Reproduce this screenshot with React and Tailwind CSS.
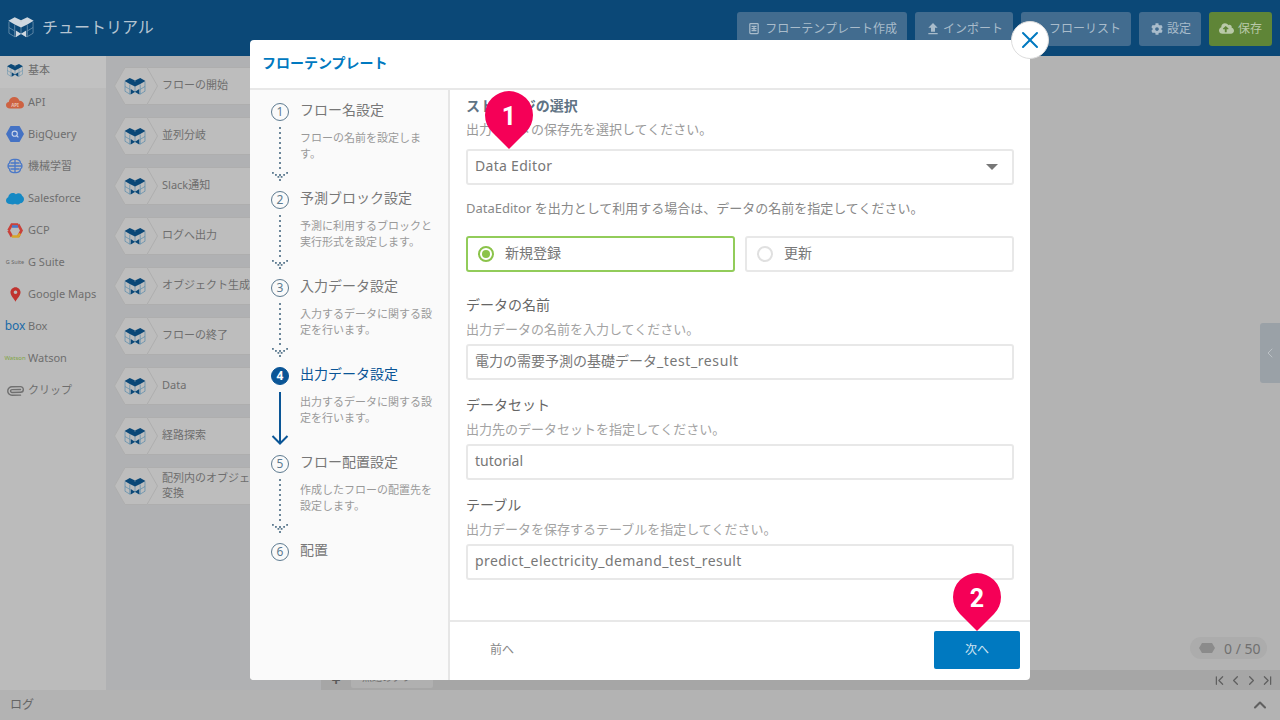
import { ChevronDown, ChevronFirst, ChevronLast, ChevronLeft, ChevronRight, ChevronUp, Paperclip, X } from 'lucide-react';
import { FaCloudUploadAlt, FaCog } from 'react-icons/fa';
import { MdFileUpload } from 'react-icons/md';

const FONT = { fontFamily: '"Noto Sans", "Noto Sans CJK JP", sans-serif' };

// cube logo used for the app mark and every block
function CubeIcon({ top = '#0b4877', line = '#3f7fa8', className = '' }) {
  return (
    <svg viewBox="0 0 22 20" className={className} fill="none">
      <path d="M0.5 5V15L5.5 18L11 15.5L16.5 18L21.5 15V5M11 8V15.5M5.5 8V18M16.5 8V18M0.5 10L5.5 13M21.5 10L16.5 13" stroke={line} strokeWidth="0.6" />
      <path d="M0 4.2L5.5 1L11 3.6L16.5 1L22 4.2L16.5 7.4L11 10L5.5 7.4Z" fill={top} />
      <path d="M11 3.6V5" stroke="#bdbdbd" strokeWidth="0.5" />
      <path d="M6.5 12.5L11 15.5L6.5 18.5ZM15.5 12.5L11 15.5L15.5 18.5Z" fill={top} />
    </svg>
  );
}

function HeaderButton({ icon, label, green }) {
  return (
    <div className={`flex h-[34px] items-center gap-1 rounded-[3px] pb-[1px] pr-[10px] text-[12px] ${green ? 'bg-[#5f8537] pl-[10px] text-[#b9c9a8]' : 'bg-[#426c8f] pl-3 text-[#a9bccb]'}`}>
      {icon}
      <span>{label}</span>
    </div>
  );
}

function Header() {
  return (
    <header className="flex h-14 justify-between bg-[#0b4877] pl-2 pr-2">
      <div className="flex items-center gap-2 pb-[2px]">
        <CubeIcon top="#cfd8e0" line="#7f9fb8" className="h-[23px] w-[26px]" />
        <span className="text-[16px] text-[#b5c4d1]">チュートリアル</span>
      </div>
      <div className="mt-3 flex gap-2 self-start">
        <HeaderButton label="フローテンプレート作成" icon={
          <svg viewBox="0 0 12 14" className="mr-[2px] h-[13px] w-[10px]" fill="none" stroke="#a9bccb" strokeWidth="1.5">
            <rect x="1" y="1" width="10" height="12" rx="1" />
            <path d="M3 4.5H9M3 7H9M3 9.5H9M6 4.5V9.5" />
          </svg>
        } />
        <HeaderButton label="インポート" icon={<MdFileUpload className="-mx-0.5 h-4 w-4" />} />
        <HeaderButton label="フローリスト" icon={<span className="h-3 w-3" />} />
        <HeaderButton label="設定" icon={<FaCog className="h-3 w-3" />} />
        <HeaderButton green label="保存" icon={<FaCloudUploadAlt className="h-[15px] w-[15px]" />} />
      </div>
    </header>
  );
}

const sideItems = [
  {
    label: '基本', active: true,
    icon: <CubeIcon className="h-[15px] w-[16px]" />,
  },
  {
    label: 'API',
    icon: (
      <svg viewBox="0 0 18 13" className="h-[13px] w-[18px]">
        <path d="M4 12.5C1.5 12.5 0 11 0 9C0 7.3 1.2 6.2 2.7 6C3.2 2.6 5.7 1 8.2 1C10.8 1 12.7 2.6 13.4 4.8C15.9 4.9 18 6.5 18 9C18 11 16.4 12.5 14 12.5Z" fill="#cd6242" />
        <text x="9" y="10.5" textAnchor="middle" fontSize="4.5" fontWeight="700" fill="#e8c0b0">API</text>
      </svg>
    ),
  },
  {
    label: 'BigQuery',
    icon: (
      <svg viewBox="0 0 18 16" className="h-4 w-[18px]" fill="none">
        <path d="M0 8L4.5 0H13.5L18 8L13.5 16H4.5Z" fill="#4472c4" />
        <circle cx="8.7" cy="7.7" r="2.6" stroke="#c9d5ea" strokeWidth="1.1" />
        <path d="M10.6 9.6L12.4 11.4" stroke="#c9d5ea" strokeWidth="1.2" />
      </svg>
    ),
  },
  {
    label: '機械学習',
    icon: (
      <svg viewBox="0 0 18 16" className="h-4 w-[18px]" fill="none" stroke="#4a78c8" strokeWidth="1.3">
        <path d="M9 1.5C6 1 3.5 2.5 3.5 5C1.5 6 1.5 10 3.5 11C3.5 13.5 6 15 9 14.5C12 15 14.5 13.5 14.5 11C16.5 10 16.5 6 14.5 5C14.5 2.5 12 1 9 1.5Z" />
        <path d="M2 8H16M4.5 5H13.5M4.5 11H13.5M9 1.5V14.5" />
      </svg>
    ),
  },
  {
    label: 'Salesforce',
    icon: (
      <svg viewBox="0 0 18 13" className="h-[13px] w-[18px]">
        <path d="M4 12C1.6 12 0 10.6 0 8.6C0 7 1 5.7 2.2 5.2C2.5 2.8 4.4 1 6.6 1C8 1 9.1 1.5 9.9 2.3C10.7 1.6 11.7 1.2 12.7 1.2C14.6 1.2 15.9 2.5 16.2 4C17.3 4.7 18 5.9 18 7.2C18 9.5 16.3 11.2 14.2 11.2C13.5 12.1 12.6 12.5 11.4 12.5C10.4 12.5 9.7 12.2 9 11.7C8.2 12.2 7.4 12.4 6.6 12.4C5.6 12.4 4.8 12.3 4 12Z" fill="#1589c4" />
      </svg>
    ),
  },
  {
    label: 'GCP',
    icon: (
      <svg viewBox="0 0 16 15" className="h-[15px] w-4" fill="none" strokeWidth="2.6">
        <path d="M1.5 7.5L4.8 1.5H11.2" stroke="#c9413a" />
        <path d="M4.8 13.5L1.5 7.5" stroke="#c9413a" />
        <path d="M11.2 1.5L14.5 7.5L11.2 13.5" stroke="#c9413a" />
        <path d="M4.8 13.5H11.2L13 10.5" stroke="#d7a52a" />
        <path d="M5 3.5H11" stroke="#4a78c8" />
      </svg>
    ),
  },
  {
    label: 'G Suite',
    icon: <span className="text-[5.5px] text-[#666]">G Suite</span>,
  },
  {
    label: 'Google Maps',
    icon: (
      <svg viewBox="0 0 12 16" className="h-[15px] w-[11px]">
        <path fillRule="evenodd" d="M6 16C4.5 12.5 0.5 9.5 0.5 5.6C0.5 2.5 3 0 6 0C9 0 11.5 2.5 11.5 5.6C11.5 9.5 7.5 12.5 6 16ZM6 7.5A2 2 0 1 0 6 3.5A2 2 0 0 0 6 7.5Z" fill="#c0332f" />
      </svg>
    ),
  },
  {
    label: 'Box',
    icon: <span className="text-[12px] leading-none text-[#1a6aa8]">box</span>,
  },
  {
    label: 'Watson',
    icon: <span className="text-[6px] text-[#7fa544]">Watson</span>,
  },
  {
    label: 'クリップ',
    icon: <Paperclip className="h-[17px] w-[17px] rotate-45 text-[#707070]" />,
  },
];

function Sidebar() {
  return (
    <nav className="w-[106px] shrink-0 bg-[#bbbbbb]">
      {sideItems.map(item => (
        <div key={item.label} className={`flex h-8 items-center gap-[3px] pb-[4px] ${item.active ? 'bg-[#c1c1c1]' : ''}`}>
          <div className="flex w-[25px] shrink-0 items-center justify-center pl-[5px]">{item.icon}</div>
          <span className="whitespace-nowrap text-[11px] text-[#6e6e6e]">{item.label}</span>
        </div>
      ))}
    </nav>
  );
}

const blocks = ['フローの開始', '並列分岐', 'Slack通知', 'ログへ出力', 'オブジェクト生成', 'フローの終了', 'Data', '経路探索'];

function Block({ children }) {
  return (
    <div className="flex h-[38px] w-[205px] items-center">
      <div className="relative h-[38px] w-[44px] shrink-0">
        <svg viewBox="0 0 44 38" className="h-[38px] w-[44px]" fill="#bdbdbd" stroke="#aeaeae">
          <path d="M0.5 19L11 0.5H33L43.5 19L33 37.5H11Z" />
        </svg>
        <CubeIcon className="absolute left-[10px] top-[10px] h-[19px] w-[22px]" />
      </div>
      <div className="-ml-[10px] flex h-[38px] flex-1 items-center whitespace-nowrap border-b border-t border-[#aeaeae] bg-[#bdbdbd] pb-[3px] pl-[14px] text-[11px] leading-[15px] text-[#6e6e6e]">
        {children}
      </div>
    </div>
  );
}

function BlockPanel() {
  return (
    <div className="flex w-[215px] shrink-0 flex-col gap-3 bg-[#b0b1b3] pl-2 pt-[11px]">
      {blocks.map(b => <Block key={b}>{b}</Block>)}
      <Block>
        <span>配列内のオブジェクト<br />変換</span>
      </Block>
    </div>
  );
}

function Canvas() {
  return (
    <div className="flex min-w-0 flex-1 flex-col">
      <div className="relative flex-1 bg-[#b3b3b3]">
        <div className="absolute right-0 top-[267px] flex h-[60px] w-5 items-center justify-center rounded-l-[3px] bg-[#9aa1a7]">
          <ChevronLeft className="h-4 w-4 text-[#bcc1c5]" strokeWidth={1.5} />
        </div>
        <div className="absolute bottom-[11px] right-[13px] flex h-[22px] w-[77px] items-center gap-[9px] rounded-full bg-[#acacac] pl-[9px] text-[14px] text-[#707070]">
          <svg viewBox="0 0 16 10" className="h-[10px] w-4"><path d="M0 5L3 0H13L16 5L13 10H3Z" fill="#8b8b8b" /></svg>
          <span>0 / 50</span>
        </div>
      </div>
      <div className="flex h-5 items-center bg-[#a6a6a6] pl-[5px] pr-[5px]">
        <span className="w-5 text-center text-[16px] font-bold leading-none text-[#5a5a5a]">+</span>
        <div className="ml-[5px] flex h-[18px] w-[82px] items-start gap-[9px] self-start rounded-[2px] bg-[#b0b0b0] pl-[11px] text-[10px] text-[#6e6e6e]">
          <span>無題のタブ</span>
          <ChevronDown className="mt-[4px] h-2 w-2" />
        </div>
        <div className="ml-auto flex gap-[1px] text-[#606060]">
          <ChevronFirst className="h-[15px] w-[15px]" />
          <ChevronLeft className="h-[15px] w-[15px]" />
          <ChevronRight className="h-[15px] w-[15px]" />
          <ChevronLast className="h-[15px] w-[15px]" />
        </div>
      </div>
    </div>
  );
}

const steps = [
  { title: 'フロー名設定', desc: <>フローの名前を設定しま<br />す。</> },
  { title: '予測ブロック設定', desc: <>予測に利用するブロックと<br />実行形式を設定します。</> },
  { title: '入力データ設定', desc: <>入力するデータに関する設<br />定を行います。</> },
  { title: '出力データ設定', desc: <>出力するデータに関する設<br />定を行います。</>, active: true },
  { title: 'フロー配置設定', desc: <>作成したフローの配置先を<br />設定します。</> },
  { title: '配置' },
];

function Connector({ active }) {
  if (active) {
    return (
      <svg viewBox="0 0 18 60" className="h-[60px] w-[18px]" fill="none" stroke="#0a5596" strokeWidth="2">
        <path d="M9 7V59M1.5 51L9 58.5L16.5 51" />
      </svg>
    );
  }
  return (
    <svg viewBox="0 0 18 60" className="h-[60px] w-[18px]" fill="#5d7a90">
      {[6, 11, 16, 21, 26, 31, 36, 41, 46, 53, 58].map(y => <rect key={y} x="8.1" y={y} width="1.8" height="2" />)}
      {[[1, 51], [4, 53], [6.5, 55], [15.2, 51], [12.2, 53], [9.7, 55]].map(([x, y]) => <rect key={x} x={x} y={y} width="1.8" height="1.8" />)}
    </svg>
  );
}

function Stepper() {
  return (
    <aside className="w-[200px] shrink-0 border-r-2 border-[#e6e6e6] bg-[#fafafa] pl-[21px] pt-[13px]">
      {steps.map((s, i) => (
        <div key={s.title} className="flex h-[88px] gap-[11px]">
          <div className="flex w-[18px] shrink-0 flex-col items-center">
            <div className={`flex h-[18px] w-[18px] shrink-0 items-center justify-center rounded-full border text-[12px] leading-none ${s.active ? 'border-[#0a5596] bg-[#0a5596] font-bold text-white' : 'border-[#5d7a90] text-[#5d7a90]'}`}>
              {i + 1}
            </div>
            {i < 5 && <Connector active={s.active} />}
          </div>
          <div className="min-w-0">
            <div className={`-mt-[2px] text-[14px] leading-[18px] ${s.active ? 'text-[#0a5596]' : 'text-[#777]'}`}>{s.title}</div>
            {s.desc && <div className="mt-[11px] whitespace-nowrap text-[11px] leading-4 text-[#999]">{s.desc}</div>}
          </div>
        </div>
      ))}
    </aside>
  );
}

function TextField({ label, help, value }) {
  return (
    <div>
      <div className="h-5 text-[14px] leading-5 text-[#666]">{label}</div>
      <div className="mt-1 h-5 text-[13px] leading-5 text-[#a3a3a3]">{help}</div>
      <div className="mt-[5px] flex h-9 items-center rounded-[3px] border-2 border-[#e8e8e8] pb-[3px] pl-[7px] text-[14px] text-[#777]">{value}</div>
    </div>
  );
}

function Radio({ label, checked }) {
  return (
    <div className={`flex h-9 flex-1 items-center gap-[11px] rounded-[3px] border-2 pl-[10px] text-[14px] text-[#777] ${checked ? 'border-[#92cc5a]' : 'border-[#e8e8e8]'}`}>
      <div className={`flex h-4 w-4 items-center justify-center rounded-full border-2 ${checked ? 'border-[#8bc34a]' : 'border-[#e0e0e0]'}`}>
        {checked && <div className="h-2 w-2 rounded-full bg-[#8bc34a]" />}
      </div>
      <span className="pb-[3px]">{label}</span>
    </div>
  );
}

function Pin({ n, className }) {
  return (
    <div className={`absolute h-[58px] w-12 ${className}`}>
      <svg viewBox="0 0 48 58" className="absolute inset-0 h-[58px] w-12">
        <path d="M24 58L7 41A24 24 0 1 1 41 41Z" fill="#f50057" />
      </svg>
      <div className="absolute inset-x-0 top-[2px] flex h-12 items-center justify-center font-['Roboto',sans-serif] text-[25px] font-bold text-white">{n}</div>
    </div>
  );
}

function Modal() {
  return (
    <div className="absolute left-[250px] top-10 flex h-[640px] w-[780px] flex-col rounded-[4px] bg-white">
      <div className="flex h-[50px] shrink-0 items-center border-b-2 border-[#e8e8e8] pb-[3px] pl-3 text-[14px] font-bold text-[#0079c0]">フローテンプレート</div>
      <div className="flex min-h-0 flex-1 overflow-hidden rounded-b-[4px]">
        <Stepper />
        <div className="flex min-w-0 flex-1 flex-col">
          <div className="flex-1 overflow-hidden px-4 pt-[6px]">
            <div className="h-5 text-[14px] font-bold leading-5 text-[#5f7384]">ストレージの選択</div>
            <div className="mt-[3px] h-5 text-[13px] leading-5 text-[#999]">出力データの保存先を選択してください。</div>
            <div className="mt-[10px] flex h-9 items-center justify-between rounded-[3px] border-2 border-[#e8e8e8] pl-[7px] pr-[14px] text-[14px] text-[#777]">
              <span className="pb-[3px] tracking-[0.3px]">Data Editor</span>
              <div className="h-0 w-0 border-x-[6px] border-t-[6px] border-x-transparent border-t-[#777]" />
            </div>
            <div className="mt-[13px] h-5 text-[13px] leading-5 text-[#888]">DataEditor を出力として利用する場合は、データの名前を指定してください。</div>
            <div className="mt-[18px] flex gap-[10px]">
              <Radio checked label="新規登録" />
              <Radio label="更新" />
            </div>
            <div className="mt-[23px] flex flex-col gap-[15px]">
              <TextField label="データの名前" help="出力データの名前を入力してください。" value={<span>電力の需要予測の基礎データ<span className="tracking-[0.6px]">_test_result</span></span>} />
              <TextField label="データセット" help="出力先のデータセットを指定してください。" value="tutorial" />
              <TextField label="テーブル" help="出力データを保存するテーブルを指定してください。" value={<span className="tracking-[0.42px]">predict_electricity_demand_test_result</span>} />
            </div>
          </div>
          <div className="flex h-[60px] shrink-0 items-center justify-between border-t-2 border-[#e8e8e8] pb-[2px] pl-10 pr-[10px]">
            <span className="pb-[1px] text-[12px] text-[#888]">前へ</span>
            <div className="flex h-[38px] w-[86px] items-center justify-center rounded-[2px] bg-[#0079c0] text-[12px] text-[#cfe4f2]">次へ</div>
          </div>
        </div>
      </div>
      <div className="absolute -right-[19px] -top-[19px] flex h-[38px] w-[38px] items-center justify-center rounded-full border border-[#ddd] bg-white">
        <X className="h-7 w-7 text-[#0079c0]" strokeWidth={1.7} />
      </div>
      <Pin n="1" className="left-[235px] top-[51px]" />
      <Pin n="2" className="left-[703px] top-[533px]" />
    </div>
  );
}

export default function App() {
  return (
    <div style={FONT} className="relative flex h-screen w-full flex-col overflow-hidden bg-[#b3b3b3]">
      <Header />
      <div className="flex min-h-0 flex-1">
        <Sidebar />
        <BlockPanel />
        <Canvas />
      </div>
      <footer className="flex h-[30px] shrink-0 items-center justify-between bg-[#b3b3b3] pl-[10px] pr-[10px] text-[12px] text-[#666]">
        <span>ログ</span>
        <ChevronUp className="h-5 w-5 text-[#606060]" strokeWidth={2.5} />
      </footer>
      <Modal />
    </div>
  );
}
